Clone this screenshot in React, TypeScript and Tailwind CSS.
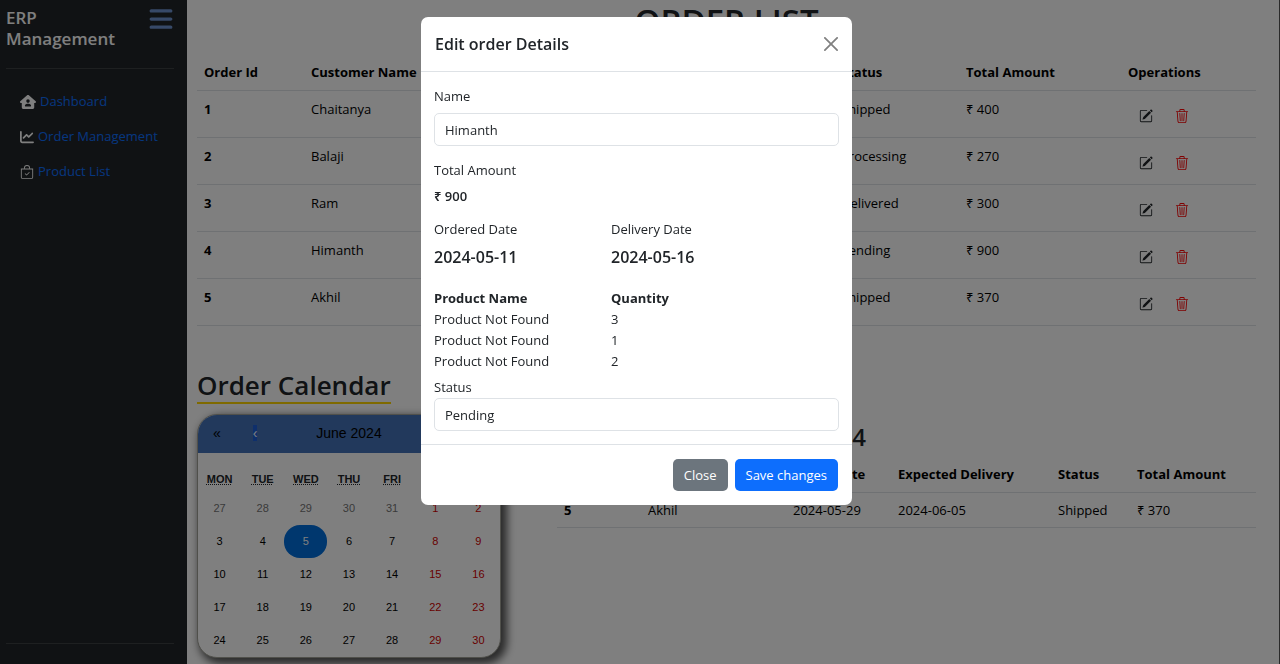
import { FaBars, FaChartLine, FaHouseUser } from "react-icons/fa6";
import { BsBagCheck, BsPencilSquare, BsTrash3 } from "react-icons/bs";

type Order = {
  id: number;
  customer: string;
  ordered: string;
  expected: string;
  status: string;
  total: number;
};

const orders: Order[] = [
  { id: 1, customer: "Chaitanya", ordered: "2024-05-08", expected: "2024-05-12", status: "Shipped", total: 400 },
  { id: 2, customer: "Balaji", ordered: "2024-05-09", expected: "2024-05-14", status: "Processing", total: 270 },
  { id: 3, customer: "Ram", ordered: "2024-05-10", expected: "2024-05-15", status: "Delivered", total: 300 },
  { id: 4, customer: "Himanth", ordered: "2024-05-11", expected: "2024-05-16", status: "Pending", total: 900 },
  { id: 5, customer: "Akhil", ordered: "2024-05-29", expected: "2024-06-05", status: "Shipped", total: 370 },
];

const weekdays = ["Mon", "Tue", "Wed", "Thu", "Fri", "Sat", "Sun"];
const weeks = [
  [27, 28, 29, 30, 31, 1, 2],
  [3, 4, 5, 6, 7, 8, 9],
  [10, 11, 12, 13, 14, 15, 16],
  [17, 18, 19, 20, 21, 22, 23],
  [24, 25, 26, 27, 28, 29, 30],
];

const lines = [
  { product: "Product Not Found", quantity: 3 },
  { product: "Product Not Found", quantity: 1 },
  { product: "Product Not Found", quantity: 2 },
];

function Sidebar() {
  return (
    <aside className="flex w-[187px] shrink-0 flex-col bg-[#212529] pr-[13px] pb-5 pl-[6px]">
      <div className="flex items-start justify-between pt-[7px]">
        <h2 className="w-[120px] text-[17px] leading-[21px] font-semibold text-white">ERP Management</h2>
        <button type="button" aria-label="Toggle menu" className="-mt-px text-[#6f93d0]">
          <FaBars size={26} />
        </button>
      </div>
      <hr className="mt-[19px] border-[#3c4043]" />
      <nav className="mt-[22px] flex flex-col gap-[14px] pl-[14px] text-[13px] leading-[21px] text-white">
        <div className="flex items-center gap-1">
          <FaHouseUser size={16} />
          <a href="#dashboard" className="text-[#0d6efd]">Dashboard</a>
        </div>
        <div className="flex items-center gap-1">
          <FaChartLine size={14} />
          <a href="#orders" className="text-[#0d6efd]">Order Management</a>
        </div>
        <div className="flex items-center gap-1">
          <BsBagCheck size={14} />
          <a href="#products" className="text-[#0d6efd]">Product List</a>
        </div>
      </nav>
      <hr className="mt-auto border-[#3c4043]" />
    </aside>
  );
}

function OrderTable() {
  return (
    <table className="w-full table-fixed text-left leading-[21px]">
      <colgroup>
        <col className="w-[107px]" />
        <col className="w-[170px]" />
        <col className="w-[170px]" />
        <col />
        <col className="w-[125px]" />
        <col className="w-[162px]" />
        <col className="w-[135px]" />
      </colgroup>
      <thead>
        <tr className="h-[35px] border-b border-[#dee2e6] text-black">
          <th className="px-[7px] font-bold">Order Id</th>
          <th className="px-[7px] font-bold whitespace-nowrap">Customer Name</th>
          <th className="px-[7px] font-bold">Ordered Date</th>
          <th className="px-[7px] font-bold">Expected Delivery</th>
          <th className="px-[7px] font-bold">Status</th>
          <th className="px-[7px] font-bold">Total Amount</th>
          <th className="px-[7px] font-bold">Operations</th>
        </tr>
      </thead>
      <tbody>
        {orders.map((o) => (
          <tr key={o.id} className="h-[47px] border-b border-[#dee2e6] align-top text-black">
            <th className="px-[7px] pt-2 font-bold">{o.id}</th>
            <td className="px-[7px] pt-2">{o.customer}</td>
            <td className="px-[7px] pt-2">{o.ordered}</td>
            <td className="px-[7px] pt-2">{o.expected}</td>
            <td className="px-[7px] pt-2">{o.status}</td>
            <td className="px-[7px] pt-2">₹ {o.total}</td>
            <td className="px-[7px]">
              <div className="flex gap-[22px] pt-[18px] pl-[11px]">
                <button type="button" aria-label={`Edit order ${o.id}`} className="text-[#212529]">
                  <BsPencilSquare size={14} />
                </button>
                <button type="button" aria-label={`Delete order ${o.id}`} className="text-[#ff0000]">
                  <BsTrash3 size={14} />
                </button>
              </div>
            </td>
          </tr>
        ))}
      </tbody>
    </table>
  );
}

function dayColor(week: number, column: number, day: number) {
  if (week === 1 && day === 5) return "bg-[#006edc] text-white";
  if (week === 0 && column < 5) return "text-[#757575]";
  if (column > 4) return "text-[#d10000]";
  return "text-black";
}

function Calendar() {
  return (
    <div className="w-[304px] overflow-hidden rounded-[20px] border border-[#a0a096] bg-white font-['Liberation_Sans',Arial,sans-serif] shadow-[4px_4px_8px_2px_#555]">
      <div className="flex h-[38px] items-stretch bg-[#4472b8] text-[14px] text-black">
        <button type="button" aria-label="Previous year" className="w-[38px]">«</button>
        <button type="button" aria-label="Previous month" className="w-[38px]">
          <span className="bg-[#1c5fd8] text-white">‹</span>
        </button>
        <button type="button" className="flex-1">June 2024</button>
        <button type="button" aria-label="Next month" className="w-[38px]">›</button>
        <button type="button" aria-label="Next year" className="w-[38px]">»</button>
      </div>
      <div className="grid grid-cols-7 pt-[13px] text-center text-[11px] leading-[26px] font-bold text-[#212529] uppercase">
        {weekdays.map((d) => (
          <div key={d}>
            <abbr title={d} className="underline decoration-dotted">{d}</abbr>
          </div>
        ))}
      </div>
      <div className="grid grid-cols-7 text-[11px]">
        {weeks.map((week, w) =>
          week.map((day, c) => (
            <button key={`${w}-${c}`} type="button" className={`h-[33px] rounded-[16px] ${dayColor(w, c, day)}`}>
              {day}
            </button>
          )),
        )}
      </div>
    </div>
  );
}

function DayOrders() {
  return (
    <section className="min-w-0 flex-1 pt-[9px]">
      <h3 className="w-[309px] text-right text-[24px] leading-[28px] font-semibold whitespace-nowrap text-[#212529]">
        Orders on June 05, 2024
      </h3>
      <table className="mt-[7px] w-full table-fixed text-left leading-[21px] whitespace-nowrap">
        <colgroup>
          <col className="w-[84px]" />
          <col className="w-[145px]" />
          <col className="w-[105px]" />
          <col className="w-[160px]" />
          <col className="w-[79px]" />
          <col />
        </colgroup>
        <thead>
          <tr className="h-[35px] border-b border-[#dee2e6] text-black">
            <th className="px-[7px] font-bold">Order Id</th>
            <th className="px-[7px] font-bold">Customer Name</th>
            <th className="px-[7px] font-bold">Order Date</th>
            <th className="px-[7px] font-bold">Expected Delivery</th>
            <th className="px-[7px] font-bold">Status</th>
            <th className="px-[7px] font-bold">Total Amount</th>
          </tr>
        </thead>
        <tbody>
          {orders.filter((o) => o.expected === "2024-06-05").map((o) => (
            <tr key={o.id} className="h-[35px] border-b border-[#dee2e6] text-black">
              <th className="px-[7px] font-bold">{o.id}</th>
              <td className="px-[7px]">{o.customer}</td>
              <td className="px-[7px]">{o.ordered}</td>
              <td className="px-[7px]">{o.expected}</td>
              <td className="px-[7px]">{o.status}</td>
              <td className="px-[7px]">₹ {o.total}</td>
            </tr>
          ))}
        </tbody>
      </table>
    </section>
  );
}

function EditOrderModal() {
  return (
    <div className="fixed inset-0 flex items-start justify-center bg-black/50 pt-[17px] pr-[7px]">
      <div role="dialog" aria-modal="true" aria-labelledby="edit-title" className="w-[431px] rounded-[7px] bg-white text-[13px] leading-[21px] text-[#212529]">
        <header className="flex h-[55px] items-center justify-between border-b border-[#dee2e6] px-[14px]">
          <h1 id="edit-title" className="text-[16px] font-semibold">Edit order Details</h1>
          <button type="button" aria-label="Close dialog" className="text-[#808080]">
            <svg viewBox="0 0 16 16" className="size-[14px]" fill="currentColor">
              <path d="M.293.293a1 1 0 0 1 1.414 0L8 6.586 14.293.293a1 1 0 1 1 1.414 1.414L9.414 8l6.293 6.293a1 1 0 0 1-1.414 1.414L8 9.414l-6.293 6.293a1 1 0 0 1-1.414-1.414L6.586 8 .293 1.707a1 1 0 0 1 0-1.414z" />
            </svg>
          </button>
        </header>
        <form className="px-[13px] pt-[14px] pb-[13px]">
          <label htmlFor="name" className="mb-[6px] block">Name</label>
          <input id="name" defaultValue="Himanth" className="block h-[33px] w-full rounded-[5px] border border-[#dee2e6] px-[10px]" />
          <div className="mt-[14px]">Total Amount</div>
          <div className="mt-[5px] font-semibold">₹ 900</div>
          <div className="mt-3 grid grid-cols-[177px_1fr]">
            <div>Ordered Date</div>
            <div>Delivery Date</div>
            <div className="mt-[7px] text-[16px] font-semibold">2024-05-11</div>
            <div className="mt-[7px] text-[16px] font-semibold">2024-05-16</div>
          </div>
          <table className="mt-5 w-full table-fixed text-left">
            <colgroup>
              <col className="w-[177px]" />
              <col />
            </colgroup>
            <thead>
              <tr>
                <th className="font-bold">Product Name</th>
                <th className="font-bold">Quantity</th>
              </tr>
            </thead>
            <tbody>
              {lines.map((line, i) => (
                <tr key={i}>
                  <td>{line.product}</td>
                  <td>{line.quantity}</td>
                </tr>
              ))}
            </tbody>
          </table>
          <label htmlFor="status" className="mt-[5px] block">Status</label>
          <input id="status" defaultValue="Pending" className="block h-[33px] w-full rounded-[5px] border border-[#dee2e6] px-[10px]" />
        </form>
        <footer className="flex justify-end gap-[7px] border-t border-[#dee2e6] px-[14px] pt-[14px] pb-[14px]">
          <button type="button" className="h-[32px] rounded-[5px] bg-[#6c757d] px-[11px] text-white">Close</button>
          <button type="button" className="h-[32px] rounded-[5px] bg-[#0d6efd] px-[11px] text-white">Save changes</button>
        </footer>
      </div>
    </div>
  );
}

export default function App() {
  return (
    <div className="flex min-h-screen bg-white font-['Open_Sans','Noto_Sans',sans-serif] text-[13px]">
      <Sidebar />
      <main className="min-w-0 flex-1 border-r border-[#555] pr-[23px] pl-[10px]">
        <h1 className="pt-[2px] text-center text-[33px] leading-[38px] font-semibold text-[#212529]">ORDER LIST</h1>
        <div className="mt-[15px]">
          <OrderTable />
        </div>
        <h2 className="mt-[43px] w-fit border-b-2 border-[#ffd400] text-[26px] leading-[33px] font-semibold text-[#212529]">
          Order Calendar
        </h2>
        <div className="mt-[10px] flex items-start gap-14">
          <Calendar />
          <DayOrders />
        </div>
      </main>
      <EditOrderModal />
    </div>
  );
}
